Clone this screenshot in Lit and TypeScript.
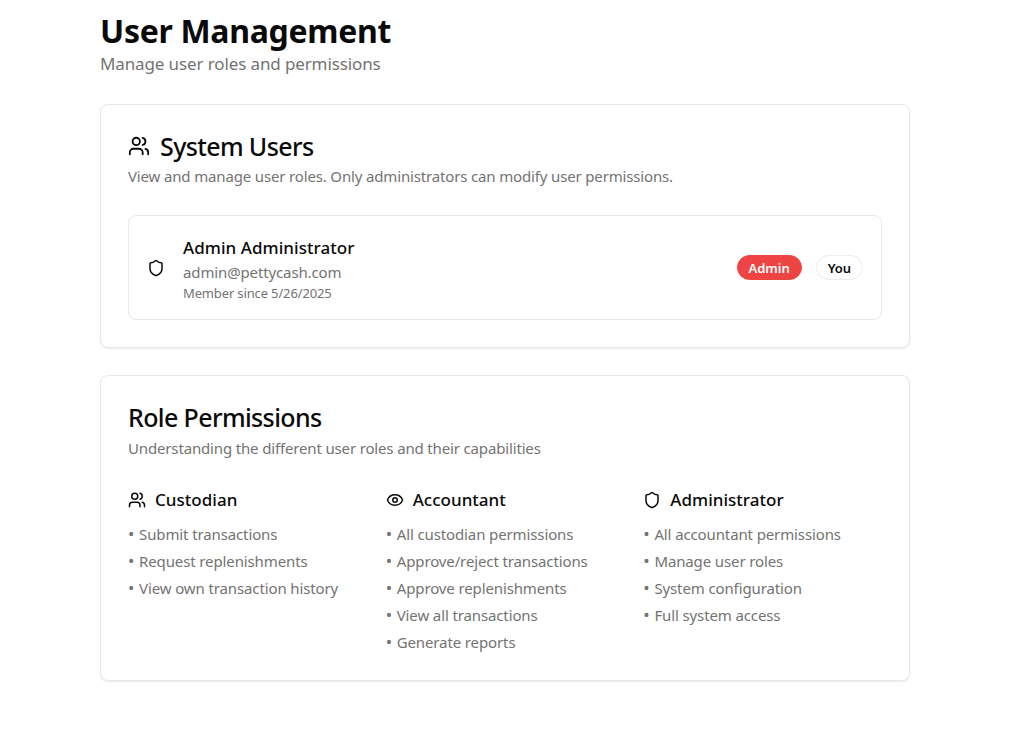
import { LitElement, html, css, svg } from "lit";
import { customElement } from "lit/decorators.js";

const users = svg`<path d="M16 21v-2a4 4 0 0 0-4-4H6a4 4 0 0 0-4 4v2"/><circle cx="9" cy="7" r="4"/><path d="M22 21v-2a4 4 0 0 0-3-3.87"/><path d="M16 3.13a4 4 0 0 1 0 7.75"/>`;
const shield = svg`<path d="M20 13c0 5-3.5 7.5-7.66 8.95a1 1 0 0 1-.67-.01C7.5 20.5 4 18 4 13V6a1 1 0 0 1 1-1c2 0 4.5-1.2 6.24-2.72a1.17 1.17 0 0 1 1.52 0C14.51 3.81 17 5 19 5a1 1 0 0 1 1 1z"/>`;
const eye = svg`<path d="M2.062 12.348a1 1 0 0 1 0-.696 10.75 10.75 0 0 1 19.876 0 1 1 0 0 1 0 .696 10.75 10.75 0 0 1-19.876 0"/><circle cx="12" cy="12" r="3"/>`;

const roles = [
  { icon: users, name: "Custodian", items: ["Submit transactions", "Request replenishments", "View own transaction history"] },
  { icon: eye, name: "Accountant", items: ["All custodian permissions", "Approve/reject transactions", "Approve replenishments", "View all transactions", "Generate reports"] },
  { icon: shield, name: "Administrator", items: ["All accountant permissions", "Manage user roles", "System configuration", "Full system access"] },
];

@customElement("app-root")
export class AppRoot extends LitElement {
  static styles = css`
    :host { display: block; font-family: "Noto Sans", "Open Sans", sans-serif; color: #0a0a0a; background: #fff; min-height: 731px; box-sizing: border-box; padding: 11px 118px 0 100px; }
    * { box-sizing: border-box; }
    svg { fill: none; stroke: currentColor; stroke-width: 2; stroke-linecap: round; stroke-linejoin: round; display: block; flex: none; }
    h1 { margin: 0; font-size: 32px; line-height: 40px; font-weight: 700; letter-spacing: -0.3px; }
    .lead { margin: 1px 0 28px; font-size: 17px; line-height: 24px; color: #737373; letter-spacing: -0.12px; }
    .card { border: 1px solid #e8e8e8; border-radius: 8px; background: #fff; padding: 27px; box-shadow: 0 1px 2px rgba(0,0,0,.08); margin-bottom: 27px; }
    .card.last { padding-bottom: 24px; }
    .title { display: flex; align-items: center; gap: 10px; margin: 0; font-size: 25px; line-height: 30px; font-weight: 500; letter-spacing: -0.62px; }
    .title svg { margin-top: -3px; }
    .title span { position: relative; top: -1px; }
    .desc { margin: 1px 0 0; font-size: 15px; line-height: 26px; color: #737373; letter-spacing: -0.154px; }
    .last .desc { margin-top: 2px; }
    .user { margin-top: 26px; border: 1px solid #e8e8e8; border-radius: 8px; padding: 18px; height: 105px; display: flex; align-items: center; gap: 18px; }
    .info { flex: 1; padding-top: 2px; }
    .name { font-size: 17px; line-height: 24px; font-weight: 500; letter-spacing: 0.05px; }
    .mail { font-size: 15px; line-height: 25px; color: #737373; letter-spacing: -0.13px; }
    .since { font-size: 13px; line-height: 17px; color: #737373; letter-spacing: -0.14px; }
    .badges { display: flex; gap: 14px; }
    .badge { border-radius: 999px; height: 25px; display: flex; align-items: center; padding: 0 11px; font-size: 13px; font-weight: 600; border: 1px solid #ececec; letter-spacing: -0.05px; }
    .badge.red { background: #ef4444; border-color: #ef4444; color: #fff; }
    .grid { margin-top: 27px; display: grid; grid-template-columns: repeat(3, 1fr); gap: 19px; }
    .role { display: flex; align-items: center; gap: 9px; font-size: 17px; line-height: 24px; font-weight: 500; letter-spacing: 0.02px; margin-bottom: 9px; }
    ul { list-style: none; margin: 0; padding: 0; }
    li { font-size: 15px; line-height: 27px; color: #737373; letter-spacing: -0.12px; }
    .dot { font-size: 17px; line-height: 0; margin-right: 1px; }
  `;

  render() {
    return html`
      <h1>User Management</h1>
      <p class="lead">Manage user roles and permissions</p>
      <section class="card">
        <h2 class="title"><svg width="22" height="22" viewBox="0 0 24 24">${users}</svg><span>System Users</span></h2>
        <p class="desc">View and manage user roles. Only administrators can modify user permissions.</p>
        <div class="user">
          <svg width="18" height="18" viewBox="0 0 24 24">${shield}</svg>
          <div class="info">
            <div class="name">Admin Administrator</div>
            <div class="mail">admin@pettycash.com</div>
            <div class="since">Member since 5/26/2025</div>
          </div>
          <div class="badges"><span class="badge red">Admin</span><span class="badge">You</span></div>
        </div>
      </section>
      <section class="card last">
        <h2 class="title"><span>Role Permissions</span></h2>
        <p class="desc">Understanding the different user roles and their capabilities</p>
        <div class="grid">
          ${roles.map((r) => html`
            <div>
              <div class="role"><svg width="18" height="18" viewBox="0 0 24 24">${r.icon}</svg>${r.name}</div>
              <ul>${r.items.map((i) => html`<li><span class="dot">•</span> ${i}</li>`)}</ul>
            </div>`)}
        </div>
      </section>
    `;
  }
}
